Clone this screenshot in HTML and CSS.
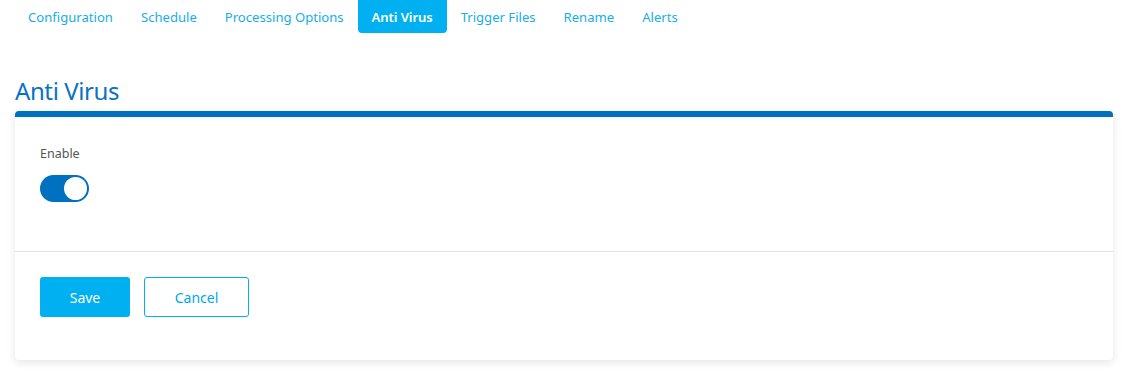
FILE: index.html
```html
<!DOCTYPE html>
<html>
<head>
<meta charset="utf-8">
<link rel="stylesheet" href="styles.css">
</head>
<body>
<nav class="tabs">
  <a class="tab">Configuration</a>
  <a class="tab">Schedule</a>
  <a class="tab">Processing Options</a>
  <a class="tab active">Anti Virus</a>
  <a class="tab">Trigger Files</a>
  <a class="tab">Rename</a>
  <a class="tab">Alerts</a>
</nav>
<h1 class="title">Anti Virus</h1>
<section class="card">
  <div class="card-body">
    <div class="label">Enable</div>
    <div class="toggle"><span class="knob"></span></div>
  </div>
  <div class="card-footer">
    <button class="btn btn-primary">Save</button>
    <button class="btn btn-outline">Cancel</button>
  </div>
</section>
</body>
</html>
```
FILE: styles.css
```css
html, body { margin: 0; padding: 0; background: #fff; }
body { font-family: "Noto Sans", "Open Sans", sans-serif; width: 1128px; height: 371px; overflow: hidden; }
.tabs { display: flex; padding-left: 14px; height: 33px; }
.tab { padding: 0 14px; font-size: 13.1px; color: #17aee9; display: flex; align-items: center; height: 33px; }
.tab.active { background: #00b0f0; color: #fff; font-weight: 600; border-radius: 0 0 4px 4px; letter-spacing: -0.1px; }
.title { margin: 42px 0 0 15px; font-weight: 400; font-size: 24px; line-height: 32px; color: #0a72c2; letter-spacing: -0.4px; }
.card { margin: 4px 15px 0 15px; border-top: 6px solid #0070c0; border-radius: 4px; background: #fff; box-shadow: 0 3px 8px rgba(0,0,0,0.10); height: 243px; }
.card-body { padding: 29px 25px 0; height: 105px; border-bottom: 1px solid #e2e2e2; }
.label { font-size: 12.5px; color: #555; line-height: 16px; }
.toggle { margin-top: 13px; width: 49px; height: 27px; border-radius: 14px; background: #0070c0; position: relative; }
.knob { position: absolute; right: 2px; top: 2px; width: 23px; height: 23px; border-radius: 50%; background: #fff; }
.card-footer { padding: 25px 25px 0; display: flex; gap: 14px; }
.btn { height: 40px; font-family: inherit; font-size: 14px; border-radius: 3px; cursor: pointer; }
.btn-primary { width: 90px; background: #00b0f0; color: #fff; border: none; }
.btn-outline { width: 105px; background: #fff; color: #00a8e8; border: 1px solid #00b0f0; }
```
